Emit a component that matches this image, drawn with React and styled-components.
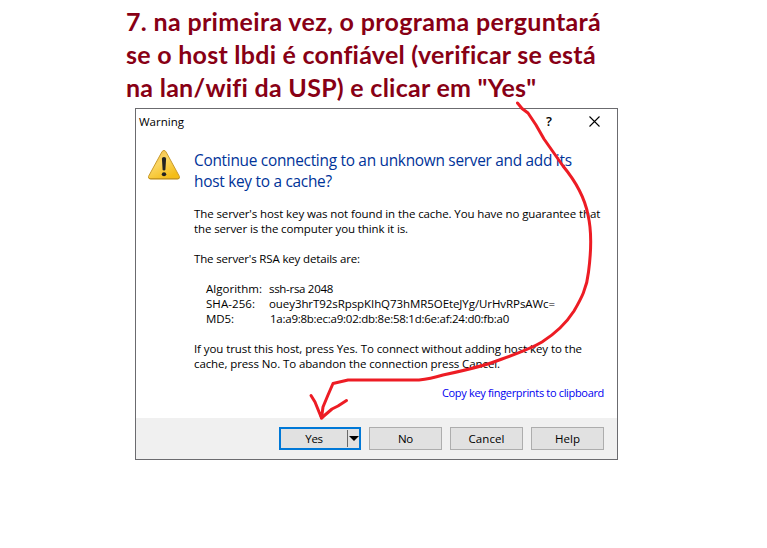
import React from 'react';
import styled, { createGlobalStyle } from 'styled-components';

const GlobalStyle = createGlobalStyle`
  body { margin: 0; background: #fff; }
  * { box-sizing: border-box; }
`;

const Page = styled.main`
  position: relative;
  width: 767px;
  height: 548px;
  overflow: hidden;
  padding: 5px 0 0 126px;
  background: #fff;
  font-family: 'Open Sans', 'Noto Sans', sans-serif;
`;

const Caption = styled.h1`
  margin: 0;
  font: bold 25px/33px Lato, 'Open Sans', sans-serif;
  color: #880015;
`;

const Line = styled.span`
  display: block;
  white-space: pre;
  letter-spacing: ${(p) => p.$spacing ?? 0}px;
`;

const Dialog = styled.section`
  display: flex;
  flex-direction: column;
  width: 483px;
  height: 352px;
  margin: 4px 0 0 9px;
  border: 1px solid #6b6b6f;
  background: #fff;
  font-size: 11.5px;
  line-height: 15px;
  color: #000;
`;

const TitleBar = styled.header`
  display: flex;
  align-items: center;
  justify-content: space-between;
  height: 25px;
  padding: 0 17px 0 3px;
`;

const WindowControls = styled.div`
  display: flex;
  align-items: center;
  gap: 37px;
  height: 24px;
`;

const HelpMark = styled.span`
  font-size: 13px;
  font-weight: 600;
  line-height: 15px;
`;

const Content = styled.div`
  display: flex;
  gap: 13px;
  height: 284px;
  padding: 16px 13px 0 11px;
`;

const WarningIcon = styled.svg`
  flex: none;
  width: 34px;
  height: 32px;
`;

const Message = styled.div`
  display: flex;
  flex: 1;
  flex-direction: column;
  min-width: 0;
`;

const Question = styled.h2`
  margin: 0 0 14px;
  font-size: 15.4px;
  font-weight: 400;
  line-height: 21px;
  color: #003399;
`;

const Paragraph = styled.p`
  margin: 0 0 15px;
`;

const KeyDetails = styled.dl`
  display: grid;
  grid-template-columns: 63px auto;
  margin: 0 0 15px;
  padding-left: 12px;
`;

const Term = styled.dt``;
const Value = styled.dd`
  margin: 0;
  padding-left: ${(p) => p.$indent ?? 0}px;
`;

const CopyLink = styled.a`
  align-self: flex-end;
  margin-top: -1px;
  font-size: 11px;
  color: #0000f0;
`;

const Footer = styled.footer`
  display: flex;
  justify-content: flex-end;
  gap: 8px;
  flex: 1;
  padding: 9px 13px 0 0;
  background: #f0f0f0;
`;

const Button = styled.button`
  width: 73px;
  height: 23px;
  padding: 0;
  border: 1px solid #adadad;
  background: #e1e1e1;
  font: 11.5px/15px 'Open Sans', 'Noto Sans', sans-serif;
  color: #000;
`;

const SplitButton = styled(Button)`
  display: flex;
  align-items: center;
  width: 82px;
  border: 2px solid #0078d7;
`;

const SplitLabel = styled.span`
  flex: 1;
`;

const SplitArrow = styled.span`
  display: flex;
  align-items: center;
  justify-content: center;
  width: 12px;
  height: 17px;
  border-left: 1px solid #696969;
`;

const Annotation = styled.svg`
  position: absolute;
  inset: 0;
  pointer-events: none;
`;

const caption = [
  ['7. na primeira vez, o programa perguntará', 0.34],
  ['se o host lbdi é confiável (verificar se está', 0.26],
  ['na lan/wifi da USP) e clicar em "Yes"', 0.27],
];

const details = [
  ['Algorithm:', 0.02, 'ssh-rsa 2048', -0.3, 0],
  ['SHA-256:', 0.06, 'ouey3hrT92sRpspKIhQ73hMR5OEteJYg/UrHvRPsAWc=', -0.074, 0],
  ['MD5:', -0.07, '1a:a9:8b:ec:a9:02:db:8e:58:1d:6e:af:24:d0:fb:a0', -0.25, 1],
];

export default function App() {
  return (
    <Page>
      <GlobalStyle />
      <Caption>
        {caption.map(([text, spacing]) => (
          <Line key={text} $spacing={spacing}>{text}</Line>
        ))}
      </Caption>
      <Dialog>
        <TitleBar>
          <Line>Warning</Line>
          <WindowControls>
            <HelpMark>?</HelpMark>
            <svg width="11" height="11" viewBox="0 0 11 11" aria-label="Close">
              <path d="M.5 .5l10 10M10.5 .5l-10 10" stroke="#000" strokeWidth="1.1" />
            </svg>
          </WindowControls>
        </TitleBar>
        <Content>
          <WarningIcon viewBox="0 0 34 32">
            <defs>
              <linearGradient id="amber" x1="0" y1="0" x2="0.6" y2="1">
                <stop offset="0" stopColor="#f2bd4a" />
                <stop offset="0.5" stopColor="#fbd662" />
                <stop offset="1" stopColor="#f4bd17" />
              </linearGradient>
            </defs>
            <path d="M15.1 2.1Q17 -.2 18.8 2.1L32.4 27Q33 29.2 30.8 29.3H3.1Q.8 29.2 1.5 27Z" transform="translate(0 -.6)" fill="url(#amber)" stroke="#c99a2c" strokeWidth="1" />
            <path d="M2 28.2Q2.4 29 4 29H30.5Q32 29 32.3 28" fill="none" stroke="#b98600" strokeWidth=".8" />
            <path d="M14.9 8.8Q14.9 7 17 7T19.1 8.8L18.4 19.8Q18.2 20.6 17 20.6T15.6 19.8Z" fill="#222" />
            <ellipse cx="17" cy="24.2" rx="2.2" ry="2" fill="#222" />
          </WarningIcon>
          <Message>
            <Question>
              <Line $spacing={-0.276}>Continue connecting to an unknown server and add its</Line>
              <Line $spacing={-0.27}>host key to a cache?</Line>
            </Question>
            <Paragraph>
              <Line $spacing={-0.1}>The server's host key was not found in the cache. You have no guarantee that</Line>
              <Line $spacing={-0.11}>the server is the computer you think it is.</Line>
            </Paragraph>
            <Paragraph>
              <Line $spacing={-0.155}>The server's RSA key details are:</Line>
            </Paragraph>
            <KeyDetails>
              {details.map(([term, termSpacing, value, valueSpacing, indent]) => (
                <React.Fragment key={term}>
                  <Term><Line $spacing={termSpacing}>{term}</Line></Term>
                  <Value $indent={indent}><Line $spacing={valueSpacing}>{value}</Line></Value>
                </React.Fragment>
              ))}
            </KeyDetails>
            <Paragraph>
              <Line $spacing={-0.088}>If you trust this host, press Yes. To connect without adding host key to the</Line>
              <Line $spacing={-0.098}>cache, press No. To abandon the connection press Cancel.</Line>
            </Paragraph>
            <CopyLink><Line $spacing={-0.33}>Copy key fingerprints to clipboard</Line></CopyLink>
          </Message>
        </Content>
        <Footer>
          <SplitButton>
            <SplitLabel><Line $spacing={-0.35}>Yes</Line></SplitLabel>
            <SplitArrow>
              <svg width="10" height="5" viewBox="0 0 10 5"><path d="M0 0h10L5 5z" /></svg>
            </SplitArrow>
          </SplitButton>
          <Button><Line $spacing={-0.29}>No</Line></Button>
          <Button><Line $spacing={0.07}>Cancel</Line></Button>
          <Button><Line $spacing={0.03}>Help</Line></Button>
        </Footer>
      </Dialog>
      <Annotation width="767" height="548" viewBox="0 0 767 548">
        <g fill="none" stroke="#ed1c24" strokeWidth="3" strokeLinecap="round" strokeLinejoin="round">
          <path d="M517.5 103L522 108.500L528 113L536 125L544 139C551 149 558 159 563 166C577 183 585 199 588 215C592 232 591 253 588.500 272C587 288 581 299 574 311C565 325 553 335 542 342C532 348 516 354 502 359C485 366 462 371 443 375Q430 379 419 380H348L333 383.500L328 395L323 407L321.500 418" />
          <path d="M311 395.500L315 402L321.500 418L332 409L338 406L346.500 400.500" />
          <path d="M321 414L322 417" strokeWidth="4" />
        </g>
      </Annotation>
    </Page>
  );
}
